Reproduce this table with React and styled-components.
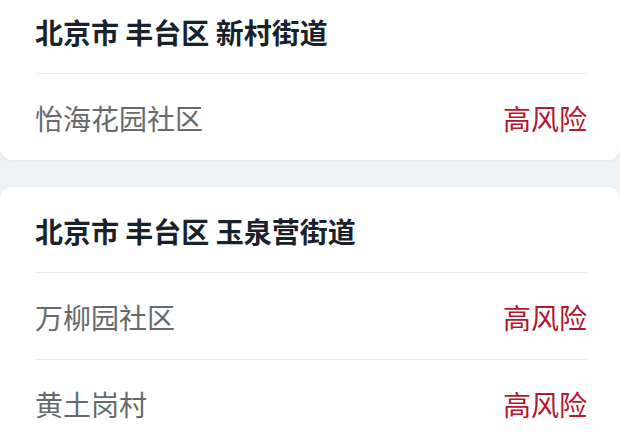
import React from "react";
import styled, { createGlobalStyle } from "styled-components";

const Global = createGlobalStyle`
  html, body { margin: 0; padding: 0; background: #eef2f5; }
  body { font-family: "Noto Sans CJK SC", "Noto Sans", sans-serif; }
`;

const Page = styled.div`
  width: 620px;
  height: 434px;
  overflow: hidden;
  background: #eef2f5;
`;

const List = styled.div`
  display: flex;
  flex-direction: column;
  gap: 27px;
  margin-top: -12px;
`;

const Card = styled.section`
  background: #ffffff;
  border-radius: 12px;
  padding: 0 33px 0 35px;
  box-shadow: 0 1px 3px rgba(30, 50, 80, 0.05);
`;

const Title = styled.h2`
  margin: 0;
  height: 85px;
  display: flex;
  align-items: center;
  padding-top: 2px;
  box-sizing: border-box;
  font-size: 28px;
  font-weight: 700;
  color: #19212b;
  white-space: pre;
`;

const Row = styled.div`
  height: 87px;
  display: flex;
  align-items: center;
  justify-content: space-between;
  border-top: 1px solid #ececec;
  padding-top: 1px;
  box-sizing: border-box;
`;

const Name = styled.span`
  font-size: 28px;
  color: #666a6e;
`;

const Risk = styled.span`
  font-size: 28px;
  color: #b4172f;
`;

const data = [
  { title: "北京市 丰台区 新村街道", items: ["怡海花园社区"] },
  { title: "北京市 丰台区 玉泉营街道", items: ["万柳园社区", "黄土岗村"] },
];

export default function App() {
  return (
    <Page>
      <Global />
      <List>
        {data.map((c) => (
          <Card key={c.title}>
            <Title>{c.title}</Title>
            {c.items.map((it) => (
              <Row key={it}>
                <Name>{it}</Name>
                <Risk>高风险</Risk>
              </Row>
            ))}
          </Card>
        ))}
      </List>
    </Page>
  );
}
